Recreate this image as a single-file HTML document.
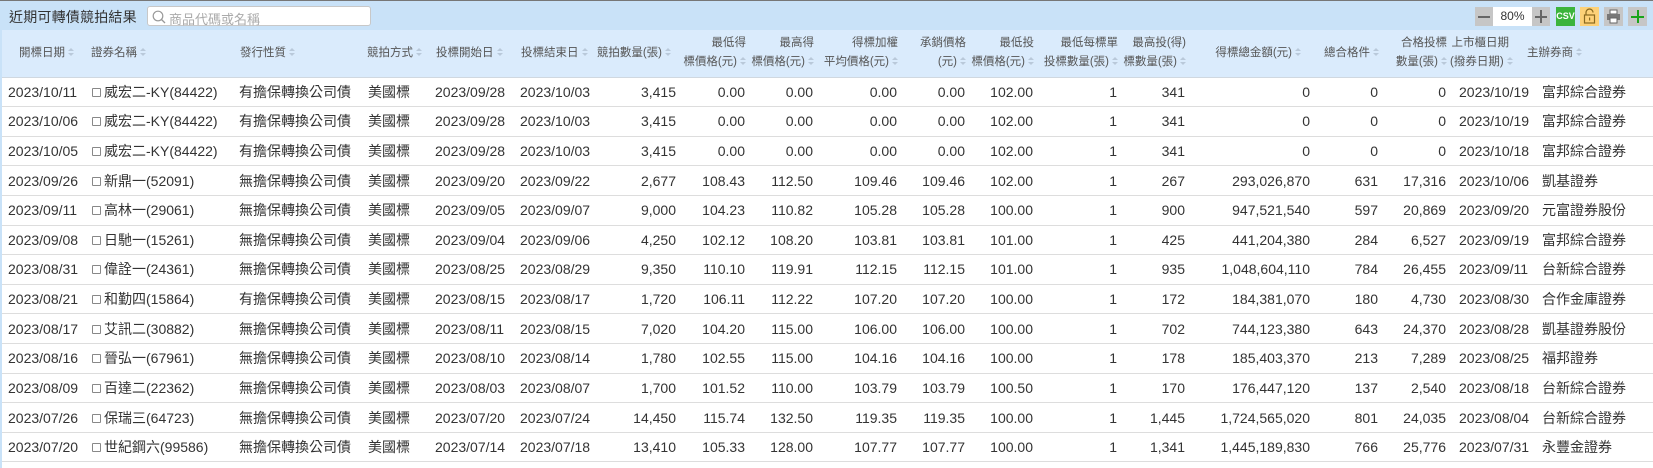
<!DOCTYPE html>
<html><head><meta charset="utf-8"><style>
*{box-sizing:border-box;margin:0;padding:0}
body{width:1653px;height:468px;overflow:hidden;background:#fff;font-family:"Liberation Sans","Noto Sans CJK TC",sans-serif;color:#333;position:relative}
.top{position:absolute;left:0;top:0;width:1653px;height:30px;background:#c9e2f8;border-top:1px solid #777}
.title{position:absolute;left:9px;top:6px;font-size:14px;color:#333;letter-spacing:0.2px}
.search{position:absolute;left:147px;top:5px;width:224px;height:20px;background:#fff;border:1px solid #c8c8c8;border-radius:3px}
.search span{position:absolute;left:21px;top:2px;font-size:13px;color:#aaa}
.search svg{position:absolute;left:4px;top:3px}
.tb{position:absolute;top:6px;height:19px}
.wrap{position:absolute;left:0;top:30px;width:1653px;border-left:2px solid #c9e2f8;height:438px}
table{border-collapse:collapse;table-layout:fixed;width:1651px}
th{background:#daebfc;height:47px;font-weight:normal;font-size:11.5px;color:#555;line-height:19px;border-bottom:1px solid #d0d8e0;white-space:nowrap;vertical-align:middle}
td{height:29.62px;font-size:14px;border-bottom:1px solid #ddd;white-space:nowrap;overflow:hidden;padding:0}
.r{text-align:right;padding-right:4px}
th.r{padding-right:3px}
.l{text-align:left}
.s{display:inline-block;width:6px;height:9px;margin-left:3px;vertical-align:-1px;position:relative}
.s:before{content:"";position:absolute;left:0;top:0;border-left:3px solid transparent;border-right:3px solid transparent;border-bottom:3.5px solid #b9c9da}
.s:after{content:"";position:absolute;left:0;top:5px;border-left:3px solid transparent;border-right:3px solid transparent;border-top:3.5px solid #b9c9da}
.cb{display:inline-block;width:9px;height:9px;border:1px solid #888;border-radius:1px;margin-right:3px;vertical-align:0px}
.d5{padding-left:14px}
</style></head><body>
<div class="top">
<div class="title">近期可轉債競拍結果</div>
<div class="search"><svg width="14" height="14" viewBox="0 0 14 14"><circle cx="6" cy="6" r="4.8" fill="none" stroke="#999" stroke-width="1.2"/><line x1="9.5" y1="9.5" x2="13" y2="13" stroke="#999" stroke-width="1.3"/></svg><span>商品代碼或名稱</span></div>
<div class="tb" style="left:1475px;width:18px;background:#c6c6c6"><div style="position:absolute;left:3px;top:9px;width:12px;height:1.5px;background:#666"></div></div>
<div class="tb" style="left:1493px;width:39px;background:#fff;font-size:12px;text-align:center;line-height:19px;color:#333">80%</div>
<div class="tb" style="left:1532px;width:18px;background:#c6c6c6"><div style="position:absolute;left:3px;top:9px;width:12px;height:1.5px;background:#666"></div><div style="position:absolute;left:8.3px;top:3px;width:1.5px;height:13px;background:#666"></div></div>
<div class="tb" style="left:1556px;width:19px;background:#3cb43c;color:#fff;font-size:9px;font-weight:bold;text-align:center;line-height:19px">CSV</div>
<div class="tb" style="left:1580px;width:19px;background:#fdd178"><svg width="19" height="19" viewBox="0 0 19 19"><path d="M6 8V5.5a3.5 3.5 0 0 1 7 0" fill="none" stroke="#8a6a20" stroke-width="1.2"/><rect x="4.5" y="8" width="10" height="8" fill="none" stroke="#8a6a20" stroke-width="1.2"/><rect x="9" y="10.5" width="1.2" height="3" fill="#8a6a20"/></svg></div>
<div class="tb" style="left:1604px;width:19px;background:#c6c6c6"><svg width="19" height="19" viewBox="0 0 19 19"><rect x="6" y="3" width="7" height="4" fill="#fff" stroke="#666"/><rect x="3" y="7" width="13" height="6" fill="#777"/><rect x="6" y="11" width="7" height="5" fill="#fff" stroke="#666"/></svg></div>
<div class="tb" style="left:1628px;width:19px;background:#c6c6c6"><div style="position:absolute;left:3px;top:8.5px;width:13px;height:2px;background:#1aa51a"></div><div style="position:absolute;left:8.5px;top:3px;width:2px;height:13px;background:#1aa51a"></div></div>
</div>
<div class="wrap"><table>
<colgroup><col style="width:84px"><col style="width:148px"><col style="width:128px"><col style="width:59px"><col style="width:93px"><col style="width:80px"><col style="width:86px"><col style="width:69px"><col style="width:68px"><col style="width:84px"><col style="width:68px"><col style="width:68px"><col style="width:84px"><col style="width:68px"><col style="width:125px"><col style="width:68px"><col style="width:68px"><col style="width:87px"><col style="width:116px"></colgroup>
<tr>
<th class="l" style="padding-left:17px">開標日期<i class="s"></i></th>
<th class="l" style="padding-left:5px">證券名稱<i class="s"></i></th>
<th class="l" style="padding-left:6px">發行性質<i class="s"></i></th>
<th class="l" style="padding-left:5px">競拍方式<i class="s"></i></th>
<th class="l" style="padding-left:15px">投標開始日<i class="s"></i></th>
<th class="l" style="padding-left:7px">投標結束日<i class="s"></i></th>
<th class="r" style="padding-right:9px">競拍數量(張)<i class="s"></i></th>
<th class="r">最低得<br>標價格(元)<i class="s"></i></th>
<th class="r">最高得<br>標價格(元)<i class="s"></i></th>
<th class="r">得標加權<br>平均價格(元)<i class="s"></i></th>
<th class="r">承銷價格<br>(元)<i class="s"></i></th>
<th class="r">最低投<br>標價格(元)<i class="s"></i></th>
<th class="r">最低每標單<br>投標數量(張)<i class="s"></i></th>
<th class="r">最高投(得)<br>標數量(張)<i class="s"></i></th>
<th class="r" style="padding-right:13px">得標總金額(元)<i class="s"></i></th>
<th class="r" style="padding-right:3px">總合格件<i class="s"></i></th>
<th class="r">合格投標<br>數量(張)<i class="s"></i></th>
<th class="r" style="padding-right:28px">上市櫃日期<br>(撥券日期)<i class="s"></i></th>
<th class="l" style="padding-left:0;text-indent:-10px">主辦券商<i class="s"></i></th>
</tr>
<tr><td style="padding-left:6px">2023/10/11</td><td style="padding-left:6px"><i class="cb"></i>威宏二-KY(84422)</td><td style="padding-left:5px">有擔保轉換公司債</td><td style="padding-left:6px">美國標</td><td class="d5">2023/09/28</td><td style="padding-left:6px">2023/10/03</td><td class="r">3,415</td><td class="r">0.00</td><td class="r">0.00</td><td class="r">0.00</td><td class="r">0.00</td><td class="r">102.00</td><td class="r">1</td><td class="r">341</td><td class="r">0</td><td class="r">0</td><td class="r">0</td><td style="padding-left:9px">2023/10/19</td><td style="padding-left:5px">富邦綜合證券</td></tr>
<tr><td style="padding-left:6px">2023/10/06</td><td style="padding-left:6px"><i class="cb"></i>威宏二-KY(84422)</td><td style="padding-left:5px">有擔保轉換公司債</td><td style="padding-left:6px">美國標</td><td class="d5">2023/09/28</td><td style="padding-left:6px">2023/10/03</td><td class="r">3,415</td><td class="r">0.00</td><td class="r">0.00</td><td class="r">0.00</td><td class="r">0.00</td><td class="r">102.00</td><td class="r">1</td><td class="r">341</td><td class="r">0</td><td class="r">0</td><td class="r">0</td><td style="padding-left:9px">2023/10/19</td><td style="padding-left:5px">富邦綜合證券</td></tr>
<tr><td style="padding-left:6px">2023/10/05</td><td style="padding-left:6px"><i class="cb"></i>威宏二-KY(84422)</td><td style="padding-left:5px">有擔保轉換公司債</td><td style="padding-left:6px">美國標</td><td class="d5">2023/09/28</td><td style="padding-left:6px">2023/10/03</td><td class="r">3,415</td><td class="r">0.00</td><td class="r">0.00</td><td class="r">0.00</td><td class="r">0.00</td><td class="r">102.00</td><td class="r">1</td><td class="r">341</td><td class="r">0</td><td class="r">0</td><td class="r">0</td><td style="padding-left:9px">2023/10/18</td><td style="padding-left:5px">富邦綜合證券</td></tr>
<tr><td style="padding-left:6px">2023/09/26</td><td style="padding-left:6px"><i class="cb"></i>新鼎一(52091)</td><td style="padding-left:5px">無擔保轉換公司債</td><td style="padding-left:6px">美國標</td><td class="d5">2023/09/20</td><td style="padding-left:6px">2023/09/22</td><td class="r">2,677</td><td class="r">108.43</td><td class="r">112.50</td><td class="r">109.46</td><td class="r">109.46</td><td class="r">102.00</td><td class="r">1</td><td class="r">267</td><td class="r">293,026,870</td><td class="r">631</td><td class="r">17,316</td><td style="padding-left:9px">2023/10/06</td><td style="padding-left:5px">凱基證券</td></tr>
<tr><td style="padding-left:6px">2023/09/11</td><td style="padding-left:6px"><i class="cb"></i>高林一(29061)</td><td style="padding-left:5px">無擔保轉換公司債</td><td style="padding-left:6px">美國標</td><td class="d5">2023/09/05</td><td style="padding-left:6px">2023/09/07</td><td class="r">9,000</td><td class="r">104.23</td><td class="r">110.82</td><td class="r">105.28</td><td class="r">105.28</td><td class="r">100.00</td><td class="r">1</td><td class="r">900</td><td class="r">947,521,540</td><td class="r">597</td><td class="r">20,869</td><td style="padding-left:9px">2023/09/20</td><td style="padding-left:5px">元富證券股份</td></tr>
<tr><td style="padding-left:6px">2023/09/08</td><td style="padding-left:6px"><i class="cb"></i>日馳一(15261)</td><td style="padding-left:5px">無擔保轉換公司債</td><td style="padding-left:6px">美國標</td><td class="d5">2023/09/04</td><td style="padding-left:6px">2023/09/06</td><td class="r">4,250</td><td class="r">102.12</td><td class="r">108.20</td><td class="r">103.81</td><td class="r">103.81</td><td class="r">101.00</td><td class="r">1</td><td class="r">425</td><td class="r">441,204,380</td><td class="r">284</td><td class="r">6,527</td><td style="padding-left:9px">2023/09/19</td><td style="padding-left:5px">富邦綜合證券</td></tr>
<tr><td style="padding-left:6px">2023/08/31</td><td style="padding-left:6px"><i class="cb"></i>偉詮一(24361)</td><td style="padding-left:5px">無擔保轉換公司債</td><td style="padding-left:6px">美國標</td><td class="d5">2023/08/25</td><td style="padding-left:6px">2023/08/29</td><td class="r">9,350</td><td class="r">110.10</td><td class="r">119.91</td><td class="r">112.15</td><td class="r">112.15</td><td class="r">101.00</td><td class="r">1</td><td class="r">935</td><td class="r">1,048,604,110</td><td class="r">784</td><td class="r">26,455</td><td style="padding-left:9px">2023/09/11</td><td style="padding-left:5px">台新綜合證券</td></tr>
<tr><td style="padding-left:6px">2023/08/21</td><td style="padding-left:6px"><i class="cb"></i>和勤四(15864)</td><td style="padding-left:5px">有擔保轉換公司債</td><td style="padding-left:6px">美國標</td><td class="d5">2023/08/15</td><td style="padding-left:6px">2023/08/17</td><td class="r">1,720</td><td class="r">106.11</td><td class="r">112.22</td><td class="r">107.20</td><td class="r">107.20</td><td class="r">100.00</td><td class="r">1</td><td class="r">172</td><td class="r">184,381,070</td><td class="r">180</td><td class="r">4,730</td><td style="padding-left:9px">2023/08/30</td><td style="padding-left:5px">合作金庫證券</td></tr>
<tr><td style="padding-left:6px">2023/08/17</td><td style="padding-left:6px"><i class="cb"></i>艾訊二(30882)</td><td style="padding-left:5px">無擔保轉換公司債</td><td style="padding-left:6px">美國標</td><td class="d5">2023/08/11</td><td style="padding-left:6px">2023/08/15</td><td class="r">7,020</td><td class="r">104.20</td><td class="r">115.00</td><td class="r">106.00</td><td class="r">106.00</td><td class="r">100.00</td><td class="r">1</td><td class="r">702</td><td class="r">744,123,380</td><td class="r">643</td><td class="r">24,370</td><td style="padding-left:9px">2023/08/28</td><td style="padding-left:5px">凱基證券股份</td></tr>
<tr><td style="padding-left:6px">2023/08/16</td><td style="padding-left:6px"><i class="cb"></i>晉弘一(67961)</td><td style="padding-left:5px">無擔保轉換公司債</td><td style="padding-left:6px">美國標</td><td class="d5">2023/08/10</td><td style="padding-left:6px">2023/08/14</td><td class="r">1,780</td><td class="r">102.55</td><td class="r">115.00</td><td class="r">104.16</td><td class="r">104.16</td><td class="r">100.00</td><td class="r">1</td><td class="r">178</td><td class="r">185,403,370</td><td class="r">213</td><td class="r">7,289</td><td style="padding-left:9px">2023/08/25</td><td style="padding-left:5px">福邦證券</td></tr>
<tr><td style="padding-left:6px">2023/08/09</td><td style="padding-left:6px"><i class="cb"></i>百達二(22362)</td><td style="padding-left:5px">無擔保轉換公司債</td><td style="padding-left:6px">美國標</td><td class="d5">2023/08/03</td><td style="padding-left:6px">2023/08/07</td><td class="r">1,700</td><td class="r">101.52</td><td class="r">110.00</td><td class="r">103.79</td><td class="r">103.79</td><td class="r">100.50</td><td class="r">1</td><td class="r">170</td><td class="r">176,447,120</td><td class="r">137</td><td class="r">2,540</td><td style="padding-left:9px">2023/08/18</td><td style="padding-left:5px">台新綜合證券</td></tr>
<tr><td style="padding-left:6px">2023/07/26</td><td style="padding-left:6px"><i class="cb"></i>保瑞三(64723)</td><td style="padding-left:5px">無擔保轉換公司債</td><td style="padding-left:6px">美國標</td><td class="d5">2023/07/20</td><td style="padding-left:6px">2023/07/24</td><td class="r">14,450</td><td class="r">115.74</td><td class="r">132.50</td><td class="r">119.35</td><td class="r">119.35</td><td class="r">100.00</td><td class="r">1</td><td class="r">1,445</td><td class="r">1,724,565,020</td><td class="r">801</td><td class="r">24,035</td><td style="padding-left:9px">2023/08/04</td><td style="padding-left:5px">台新綜合證券</td></tr>
<tr><td style="padding-left:6px">2023/07/20</td><td style="padding-left:6px"><i class="cb"></i>世紀鋼六(99586)</td><td style="padding-left:5px">無擔保轉換公司債</td><td style="padding-left:6px">美國標</td><td class="d5">2023/07/14</td><td style="padding-left:6px">2023/07/18</td><td class="r">13,410</td><td class="r">105.33</td><td class="r">128.00</td><td class="r">107.77</td><td class="r">107.77</td><td class="r">100.00</td><td class="r">1</td><td class="r">1,341</td><td class="r">1,445,189,830</td><td class="r">766</td><td class="r">25,776</td><td style="padding-left:9px">2023/07/31</td><td style="padding-left:5px">永豐金證券</td></tr>
</table></div>
</body></html>
